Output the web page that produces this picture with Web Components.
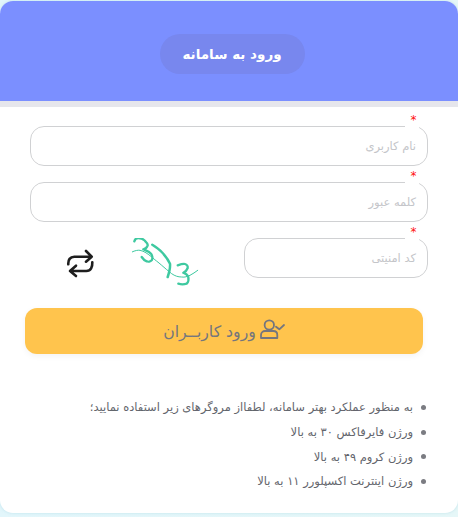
<!DOCTYPE html>
<html lang="fa" dir="rtl"><head><meta charset="utf-8"><title>ورود به سامانه</title>
<style>html,body{margin:0;padding:0;height:517px;overflow:hidden;background:linear-gradient(90deg,#e2f6fb,#e6f7f8);font-family:"DejaVu Sans",sans-serif}</style></head>
<body>
<login-card>
  <login-header slot="header">ورود به سامانه</login-header>
  <text-field placeholder="نام کاربری"></text-field>
  <text-field placeholder="کلمه عبور"></text-field>
  <captcha-row></captcha-row>
  <submit-button>ورود کاربــران</submit-button>
  <info-list>
    <li>به منظور عملکرد بهتر سامانه، لطفااز مروگرهای زیر استفاده نمایید؛</li>
    <li>ورژن فایرفاکس ۳۰ به بالا</li>
    <li>ورژن کروم ۴۹ به بالا</li>
    <li>ورژن اینترنت اکسپلورر ۱۱ به بالا</li>
  </info-list>
</login-card>
<script>
const def=(name,html)=>customElements.define(name,class extends HTMLElement{
  constructor(){super();this.attachShadow({mode:'open'}).innerHTML=typeof html==='function'?html(this):html;}
});
def('login-card',`<style>
:host{display:block;box-sizing:border-box;margin-top:1px;height:512px;background:#fff;border-radius:13px;overflow:hidden;box-shadow:0 0 3px rgba(120,190,210,.35)}
.body{display:flex;flex-direction:column;padding:19px 30px 0 30px}
</style><slot name="header"></slot><div class="body"><slot></slot></div>`);
def('login-header',`<style>
:host{display:flex;align-items:center;justify-content:center;box-sizing:border-box;height:106px;padding:6px 0 0 6px;background:#7b8fff;border-bottom:6px solid #e6e6ec}
span{display:flex;align-items:center;justify-content:center;width:145px;height:40px;border-radius:20px;background:#7887ee;color:#fff;font-size:13.5px;font-weight:bold;white-space:nowrap}
</style><span><slot></slot></span>`);
const field=`.box{box-sizing:border-box;height:40px;border:1px solid #d0d1d3;border-radius:14px;display:flex;align-items:center;padding:0 11px;color:#c4c5c9;font-size:11.5px;background:#fff}
.star{position:absolute;top:-13px;right:9px;box-sizing:border-box;width:14px;height:16px;padding-left:3px;background:#fff;color:#f11;font:12px/15px "DejaVu Sans",sans-serif;text-align:center}`;
def('text-field',h=>`<style>:host{display:block;position:relative;margin-bottom:16px} ${field}</style><div class="star">*</div><div class="box">${h.getAttribute('placeholder')}</div>`);
def('captcha-row',`<style>
:host{display:grid;grid-template-columns:184px 1fr;align-items:center;height:40px;margin-bottom:30px}
${field}
.f{position:relative}
.side{display:flex;align-items:center;height:40px}
.cap{width:72px;height:52px;margin:12px 40px 0 0;flex:none}
.re{width:30px;height:30px;margin:12px 37px 0 0;flex:none}
</style>
<div class="f"><div class="star">*</div><div class="box">کد امنیتی</div></div>
<div class="side">
<svg class="cap" viewBox="0 0 72 52" fill="none" stroke="#3ec9a0" stroke-linecap="round" stroke-linejoin="round">
<path stroke-width="1" d="M0 14C3 12.500 6 12 8 12.300C12 13 16 16 19.700 19C23 22 26 24 29.700 27.300C33 30 36 33 39.700 35.700C43 38 46 39 49.700 39C53 39.500 55 38.500 58 37.300C61 36 63 34 65.700 32.300"/>
<path stroke-width="2.300" d="M2.300 3.300C3 1 5 0 6.300 0C9 0 11 1 12.300 2.300C14 4 16 5.500 15.700 7.300C15 9.500 13 11 11.300 11.300C14 12.500 17 13.500 19 15.700C20.500 18 20.500 21 19.700 22.300C18.500 23.500 16 24 14.700 23.300C12.500 22.500 11 21 9.700 19"/>
<path stroke-width="2.500" d="M20.300 6.700C24 9 27 11 29.700 14C33 17.500 36 21.500 38 25.700C38.500 30 37 35 35.700 39"/>
<path stroke-width="2.300" d="M45.700 27.300C48 26.500 51 25.500 53 26C55 26.500 56 28.500 55.700 30C55 32 53 34 51.300 34.700C53.500 35.500 55.500 37 56.300 39C56.800 41.500 56 44.500 54.700 45.700C52 46.500 49 46.500 46.300 45.700"/>
</svg>
<svg class="re" viewBox="0 0 30 30" fill="none" stroke="#1e1e1e" stroke-width="2.600" stroke-linecap="round" stroke-linejoin="round">
<path d="M3.300 15.300C3 11 5 7.700 9.300 7.700H26.700M21 2L26.700 7.700L21 12.700"/>
<path d="M27.300 13.300C27.500 18 26 22 21.300 22H5M11 16.700L5 22L11 27"/>
</svg>
</div>`);
def('submit-button',`<style>
:host{display:flex;align-items:center;justify-content:center;gap:3px;box-sizing:border-box;height:46px;width:398px;margin-right:5px;background:#ffc44d;border-radius:12px;color:#74767e;font-size:15.700px;box-shadow:0 2px 6px rgba(0,0,0,.05)}
svg{width:26px;height:24px;flex:none}
</style>
<svg viewBox="0 0 26 24" fill="none" stroke="#74767e" stroke-width="1.800" stroke-linecap="round" stroke-linejoin="round">
<circle cx="10.300" cy="6" r="4.700"/><path d="M2 19V16C2 13.500 4 12 6 12H14.300C16.500 12 18.300 13.500 18.300 16V19ZM17 7.700L20.300 10.300L25 6"/></svg>
<span><slot></slot></span>`);
def('info-list',`<style>
:host{display:block;margin-top:41px;color:#63656c;font-size:11.5px}
ul{margin:0 2px 0 0;padding:0}
::slotted(li){display:flex;align-items:center;gap:8px;list-style:none;height:24.700px;white-space:nowrap}
::slotted(li)::before{content:"";width:5px;height:5px;border-radius:50%;background:#7b7c82;flex:none}
</style><ul><slot></slot></ul>`);
</script>
</body></html>
